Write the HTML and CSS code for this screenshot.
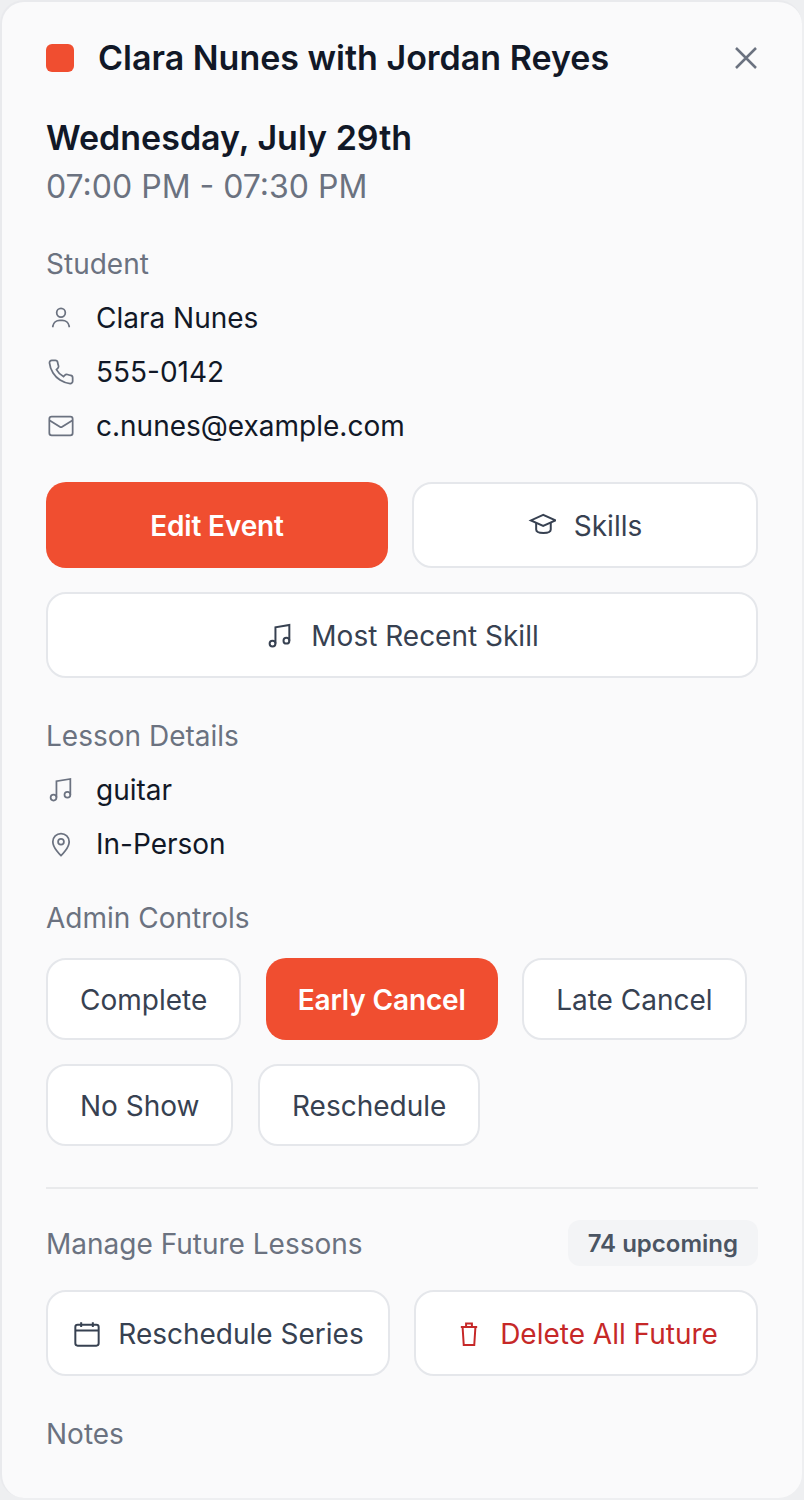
FILE: index.html
```html
<!DOCTYPE html>
<html lang="en">
<head>
    <meta charset="UTF-8">
    <title>Event Details</title>
    <link rel="stylesheet" href="styles.css">
</head>
<body>
    <div class="card">
        <div class="title-row">
            <span class="color-dot"></span>
            <h1 class="title">Clara Nunes with Jordan Reyes</h1>
            <svg class="close-icon" viewBox="0 0 24 24"><path d="M2 2l20 20M22 2L2 22"/></svg>
        </div>
        <h2 class="date">Wednesday, July 29th</h2>
        <p class="time">07:00 PM - 07:30 PM</p>

        <h3 class="label label-student">Student</h3>
        <div class="info-row">
            <svg class="icon" viewBox="0 0 24 24"><path d="M5 20v-1a6 6 0 0 1 6-5h2a6 6 0 0 1 6 5v1"/><circle cx="12" cy="7.5" r="3.7"/></svg>
            <span>Clara Nunes</span>
        </div>
        <div class="info-row">
            <svg class="icon" viewBox="0 0 24 24"><path d="M22 16.92v3a2 2 0 0 1-2.18 2 19.79 19.79 0 0 1-8.63-3.07 19.5 19.5 0 0 1-6-6 19.79 19.79 0 0 1-3.07-8.67A2 2 0 0 1 4.11 2h3a2 2 0 0 1 2 1.72 12.84 12.84 0 0 0 .7 2.81 2 2 0 0 1-.45 2.11L8.09 9.91a16 16 0 0 0 6 6l1.27-1.27a2 2 0 0 1 2.11-.45 12.84 12.84 0 0 0 2.81.7A2 2 0 0 1 22 16.92z"/></svg>
            <span>555-0142</span>
        </div>
        <div class="info-row">
            <svg class="icon" viewBox="0 0 24 24"><rect x="2" y="4" width="20" height="16" rx="2"/><path d="M22 7l-8.97 5.7a1.94 1.94 0 0 1-2.06 0L2 7"/></svg>
            <span>c.nunes@example.com</span>
        </div>

        <div class="btn-grid btn-grid-event">
            <button class="btn btn-primary btn-tall">Edit Event</button>
            <button class="btn btn-tall">
                <svg class="btn-icon" viewBox="0 0 24 24"><path d="M13 2.5L2.5 7.2 13 12l10.5-4.8z"/><path d="M7 9.5V15c0 4 12.5 4 12.5 0V9.5"/></svg>
                Skills
            </button>
        </div>
        <button class="btn btn-tall btn-wide">
            <svg class="btn-icon btn-icon-shift" viewBox="0 0 24 24"><path d="M8.1 18.5V4.5L20 2.5V16"/><circle cx="5.6" cy="18.5" r="2.5"/><circle cx="17.5" cy="16" r="2.5"/></svg>
            Most Recent Skill
        </button>

        <h3 class="label label-lesson">Lesson Details</h3>
        <div class="info-row">
            <svg class="icon" viewBox="0 0 24 24"><path d="M8.1 18.5V4.5L20 2.5V16"/><circle cx="5.6" cy="18.5" r="2.5"/><circle cx="17.5" cy="16" r="2.5"/></svg>
            <span>guitar</span>
        </div>
        <div class="info-row">
            <svg class="icon" viewBox="0 0 24 24"><path d="M19 10c0 5.5-7 12-7 12s-7-6.5-7-12a7 7 0 0 1 14 0z"/><circle cx="12" cy="10" r="2.5"/></svg>
            <span>In-Person</span>
        </div>

        <h3 class="label label-admin">Admin Controls</h3>
        <div class="admin-controls">
            <button class="btn btn-small">Complete</button>
            <button class="btn btn-small btn-primary">Early Cancel</button>
            <button class="btn btn-small">Late Cancel</button>
            <button class="btn btn-small">No Show</button>
            <button class="btn btn-small">Reschedule</button>
        </div>

        <hr class="divider">

        <div class="future-header">
            <h3 class="label">Manage Future Lessons</h3>
            <span class="badge">74 upcoming</span>
        </div>
        <div class="btn-grid btn-grid-future">
            <button class="btn btn-tall">
                <svg class="btn-icon btn-icon-shift" viewBox="0 0 24 24"><rect x="2" y="4" width="20" height="18" rx="2"/><path d="M7 2v4M17 2v4M2 9h20"/></svg>
                Reschedule Series
            </button>
            <button class="btn btn-tall btn-danger">
                <svg class="btn-icon btn-icon-shift" viewBox="0 0 24 24"><path d="M5 6h14M6.5 6l1 15.5h9l1-15.5M9.5 6V3h5v3"/></svg>
                Delete All Future
            </button>
        </div>

        <h3 class="label label-notes">Notes</h3>
    </div>
</body>
</html>
```

FILE: styles.css
```css
* {
    box-sizing: border-box;
}
body {
    margin: 0;
    height: 1500px;
    padding: 0 2px 2px 0;
    background-color: #eeeff1;
    font-family: Inter, "Liberation Sans", sans-serif;
    overflow: hidden;
}
.card {
    height: 1498px;
    padding: 0 44px;
    border: solid #e9eaed;
    border-width: 2px 0 0 2px;
    background-color: #fafafb;
    border-radius: 24px;
}
.title-row {
    display: flex;
    align-items: center;
    padding-top: 35px;
    height: 77px;
}
.color-dot {
    width: 28px;
    height: 28px;
    margin-right: 24px;
    border-radius: 6px;
    background-color: #f04e30;
}
.title {
    flex: 1;
    margin: 0;
    font-size: 34px;
    line-height: 42px;
    font-weight: 600;
    color: #111827;
}
.close-icon {
    width: 24px;
    height: 24px;
    fill: none;
    stroke: #6b7280;
    stroke-width: 2.5;
}
.date {
    margin: 37px 0 0;
    font-size: 34px;
    line-height: 44px;
    font-weight: 600;
    color: #111827;
}
.time {
    margin: 5px 0 0;
    font-size: 32px;
    line-height: 44px;
    color: #6b7280;
}
.label {
    margin: 0;
    font-size: 28px;
    line-height: 40px;
    font-weight: 400;
    color: #6b7280;
}
.label-student {
    margin-top: 35px;
}
.label-lesson {
    margin-top: 38px;
}
.label-admin {
    margin-top: 27px;
}
.label-notes {
    margin-top: 38px;
}
.info-row {
    display: flex;
    align-items: center;
    height: 54px;
    font-size: 28px;
    color: #111827;
}
.label + .info-row {
    margin-top: 7px;
}
.icon {
    flex: none;
    width: 28px;
    height: 28px;
    margin: 0 21px 0 1px;
    fill: none;
    stroke: #6b7280;
    stroke-width: 1.5;
}
.btn-grid {
    display: grid;
    gap: 24px;
}
.btn-grid-event {
    grid-template-columns: 342fr 346fr;
    margin-top: 29px;
}
.btn-grid-future {
    grid-template-columns: 1fr 1fr;
    margin-top: 24px;
}
.btn {
    display: flex;
    align-items: center;
    justify-content: center;
    gap: 18px;
    padding-top: 2px;
    border: 2px solid #e5e7eb;
    border-radius: 20px;
    background-color: #fff;
    font-family: inherit;
    font-size: 28px;
    color: #374151;
}
.btn-tall {
    height: 86px;
}
.btn-wide {
    width: 100%;
    margin-top: 24px;
}
.btn-small {
    height: 82px;
    padding: 2px 32px 0;
}
.btn-primary {
    border: 0;
    background-color: #f04e30;
    font-weight: 600;
    letter-spacing: -0.15px;
    color: #fff;
}
.btn-danger {
    color: #c62828;
}
.btn-icon {
    flex: none;
    width: 28px;
    height: 28px;
    fill: none;
    stroke: currentColor;
    stroke-width: 1.7;
}
.btn-icon-shift {
    transform: translateX(1px);
}
.admin-controls {
    display: flex;
    flex-wrap: wrap;
    gap: 24px 24.5px;
    margin-top: 20px;
}
.divider {
    margin: 41px 0 0;
    border: 0;
    border-top: 2px solid #e9eaec;
}
.future-header {
    display: flex;
    align-items: center;
    justify-content: space-between;
    margin-top: 31px;
}
.future-header .label {
    padding-top: 2px;
    height: 42px;
}
.badge {
    padding: 2px 20px 0;
    height: 46px;
    line-height: 44px;
    border-radius: 12px;
    background-color: #f3f4f6;
    font-size: 24px;
    font-weight: 600;
    color: #4b5563;
}
```
